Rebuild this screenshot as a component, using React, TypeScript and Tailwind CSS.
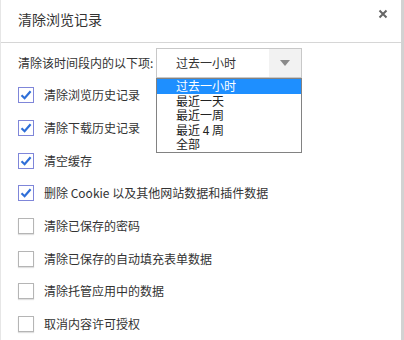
import { useState } from 'react'

const OPTIONS = ['过去一小时', '最近一天', '最近一周', '最近 4 周', '全部']

const ITEMS = [
  { label: '清除浏览历史记录', checked: true },
  { label: '清除下载历史记录', checked: true },
  { label: '清空缓存', checked: true },
  { label: '删除 Cookie 以及其他网站数据和插件数据', checked: true },
  { label: '清除已保存的密码', checked: false },
  { label: '清除已保存的自动填充表单数据', checked: false },
  { label: '清除托管应用中的数据', checked: false },
  { label: '取消内容许可授权', checked: false },
]

function Box({ checked }: { checked: boolean }) {
  return (
    <span
      className={`w-[16px] h-[16px] shrink-0 flex items-center justify-center border bg-white ${
        checked ? 'border-[#7f86d9]' : 'border-[#b5b5b5] shadow-[0_1px_1px_rgba(0,0,0,0.12)]'
      }`}
    >
      {checked && (
        <svg width="12" height="12" viewBox="0 0 12 12">
          <path d="M1.5 6.2 L4.6 9.2 L10.6 2.2" fill="none" stroke="#2f6fd8" strokeWidth="2.2" />
        </svg>
      )}
    </span>
  )
}

export default function App() {
  const [rows, setRows] = useState(ITEMS)

  return (
    <div
      className="w-[404px] h-[340px] bg-white overflow-hidden text-[#333] text-[12px]"
      style={{ fontFamily: '"Microsoft YaHei", "Noto Sans CJK SC", sans-serif' }}
    >
      <div className="w-full h-full border-l border-[#e6e6e6] border-r-[3px] border-r-[#d2d2d2]">
        <div className="h-[43px] flex items-center justify-between pl-[17px] pr-[13px] border-b border-[#d6d6d6]">
          <span className="text-[14px] text-[#333] mt-[-4px]">清除浏览记录</span>
          <svg width="10" height="10" viewBox="0 0 10 10" className="mt-[-14px]">
            <path d="M1.5 1.5 L8.5 8.5 M8.5 1.5 L1.5 8.5" stroke="#666" strokeWidth="2" />
          </svg>
        </div>

        <div className="pl-[17px]">
          <div className="flex items-center h-[32px] mt-[4px]">
            <span className="w-[138px] shrink-0 whitespace-nowrap">清除该时间段内的以下项:</span>
            <div className="relative">
              <div className="w-[146px] h-[30px] border border-[#c8c8c8] flex items-center bg-white">
                <span className="pl-[19px] flex-1">过去一小时</span>
                <span className="w-[32px] h-full bg-[#f2f2f2] flex items-center justify-center">
                  <svg width="10" height="6" viewBox="0 0 10 6">
                    <path d="M0 0 H10 L5 6 Z" fill="#8a8a8a" />
                  </svg>
                </span>
              </div>
              <div className="absolute left-0 top-[30px] w-[146px] border border-[#828282] bg-white z-10">
                {OPTIONS.map((o, i) => (
                  <div
                    key={o}
                    className={`h-[14.6px] leading-[14.6px] pl-[19px] ${i === 0 ? 'bg-[#1e8fff] text-white' : 'text-[#222]'}`}
                  >
                    {o}
                  </div>
                ))}
              </div>
            </div>
          </div>

          <div className="flex flex-col">
            {rows.map((r, i) => (
              <label
                key={r.label}
                className="h-[32.7px] flex items-center gap-[10px] cursor-pointer"
                onClick={() => setRows((prev) => prev.map((p, j) => (j === i ? { ...p, checked: !p.checked } : p)))}
              >
                <Box checked={r.checked} />
                <span>{r.label}</span>
              </label>
            ))}
          </div>
        </div>
      </div>
    </div>
  )
}
